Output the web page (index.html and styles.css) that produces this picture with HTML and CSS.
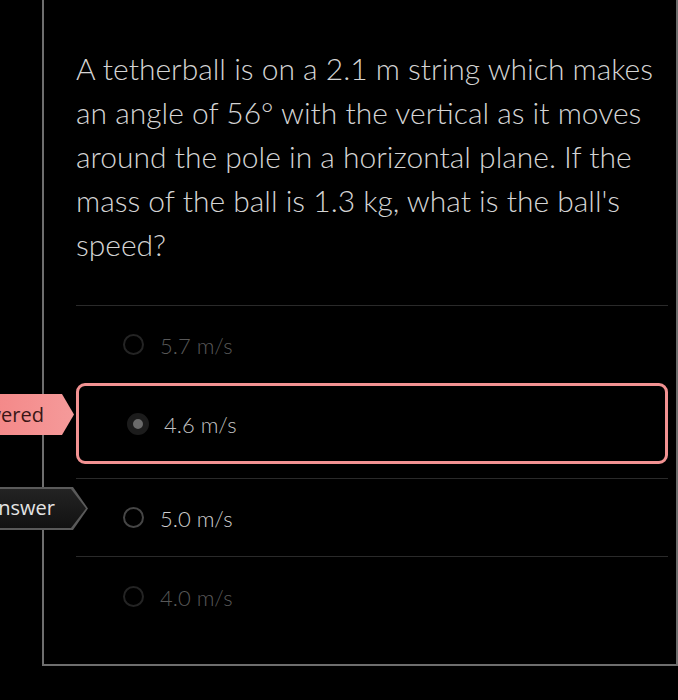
FILE: index.html
```html
<!DOCTYPE html>
<html>
<head>
<meta charset="utf-8">
<link rel="stylesheet" href="styles.css">
</head>
<body>
<div class="card">
  <p class="question">A tetherball is on a 2.1 m string which makes an angle of 56° with the vertical as it moves around the pole in a horizontal plane. If the mass of the ball is 1.3 kg, what is the ball's speed?</p>
  <div class="answers">
    <div class="option dim"><span class="radio"></span><span class="label">5.7 m/s</span></div>
    <div class="option selected"><span class="radio checked"></span><span class="label">4.6 m/s</span></div>
    <div class="option correct"><span class="radio"></span><span class="label">5.0 m/s</span></div>
    <div class="option dim last"><span class="radio"></span><span class="label">4.0 m/s</span></div>
  </div>
</div>
<div class="tag tag-you"><span>You Answered</span></div>
<div class="tag tag-correct"><div class="tag-inner"><span>Correct Answer</span></div></div>
</body>
</html>
```
FILE: styles.css
```css
html, body {
  margin: 0;
  padding: 0;
  background: #000;
  width: 678px;
  height: 700px;
  overflow: hidden;
}
body {
  position: relative;
  font-family: "Lato Light", Lato, "Open Sans", sans-serif;
}
.card {
  margin-left: 42px;
  width: 592px;
  height: 664px;
  border-left: 2px solid #6e6e6e;
  border-right: 2px solid #6e6e6e;
  border-bottom: 2px solid #6e6e6e;
  padding: 0 8px 0 32px;
}
.question {
  margin: 0;
  padding-top: 46px;
  font-size: 30px;
  line-height: 44px;
  font-weight: 300;
  color: #d4d4d4;
  height: 259px;
}
.answers {
  display: flex;
  flex-direction: column;
}
.option {
  display: flex;
  align-items: center;
  height: 77px;
  border-top: 1px solid #2a2a2a;
  padding-left: 47px;
  font-size: 22px;
  font-weight: 300;
}
.option .radio {
  width: 21px;
  height: 21px;
  border-radius: 50%;
  border: 2px solid #2e2e2e;
  box-sizing: border-box;
  margin-right: 16px;
}
.option .label { margin-top: 2px; }
.option.dim .label { color: #585858; }
.option.dim .radio { border-color: #242424; }
.option.correct .label { color: #cdcdcd; }
.option.correct .radio { border-color: #464646; }
.option.selected {
  height: 75px;
  border: 3px solid #f29292;
  border-radius: 9px;
  padding-left: 48px;
  margin-bottom: 14px;
}
.option.selected .label { color: #c2c2c2; }
.radio.checked {
  background: #6a6a6a;
  border: 6px solid #1c1c1c;
  width: 22px;
  height: 22px;
  margin-right: 15px;
}
.option.last { height: 78px; }

.tag {
  position: absolute;
  height: 41px;
  display: flex;
  align-items: center;
  justify-content: flex-end;
  font-family: "Open Sans", "DejaVu Sans", sans-serif;
  font-size: 20px;
  white-space: nowrap;
}
.tag-you {
  top: 394px;
  left: -100px;
  width: 174px;
  background: linear-gradient(90deg, #f27373 0%, #f59a9a 100%);
  clip-path: polygon(0 0, 162px 0, 100% 50%, 162px 100%, 0 100%);
  color: #3a1616;
}
.tag-you span { margin-right: 30px; }
.tag-correct {
  top: 487px;
  left: -100px;
  width: 188px;
  height: 43px;
  background: #5a5a5a;
  clip-path: polygon(0 0, 173px 0, 100% 50%, 173px 100%, 0 100%);
  align-items: stretch;
}
.tag-inner {
  flex: 1;
  margin: 2px 2px 2px 0;
  background: linear-gradient(180deg, #232323 0%, #121212 100%);
  clip-path: polygon(0 0, 171px 0, 100% 50%, 171px 100%, 0 100%);
  display: flex;
  align-items: center;
  justify-content: flex-end;
  color: #e4e4e4;
}
.tag-inner span { margin-right: 31px; margin-top: -3px; }
```
